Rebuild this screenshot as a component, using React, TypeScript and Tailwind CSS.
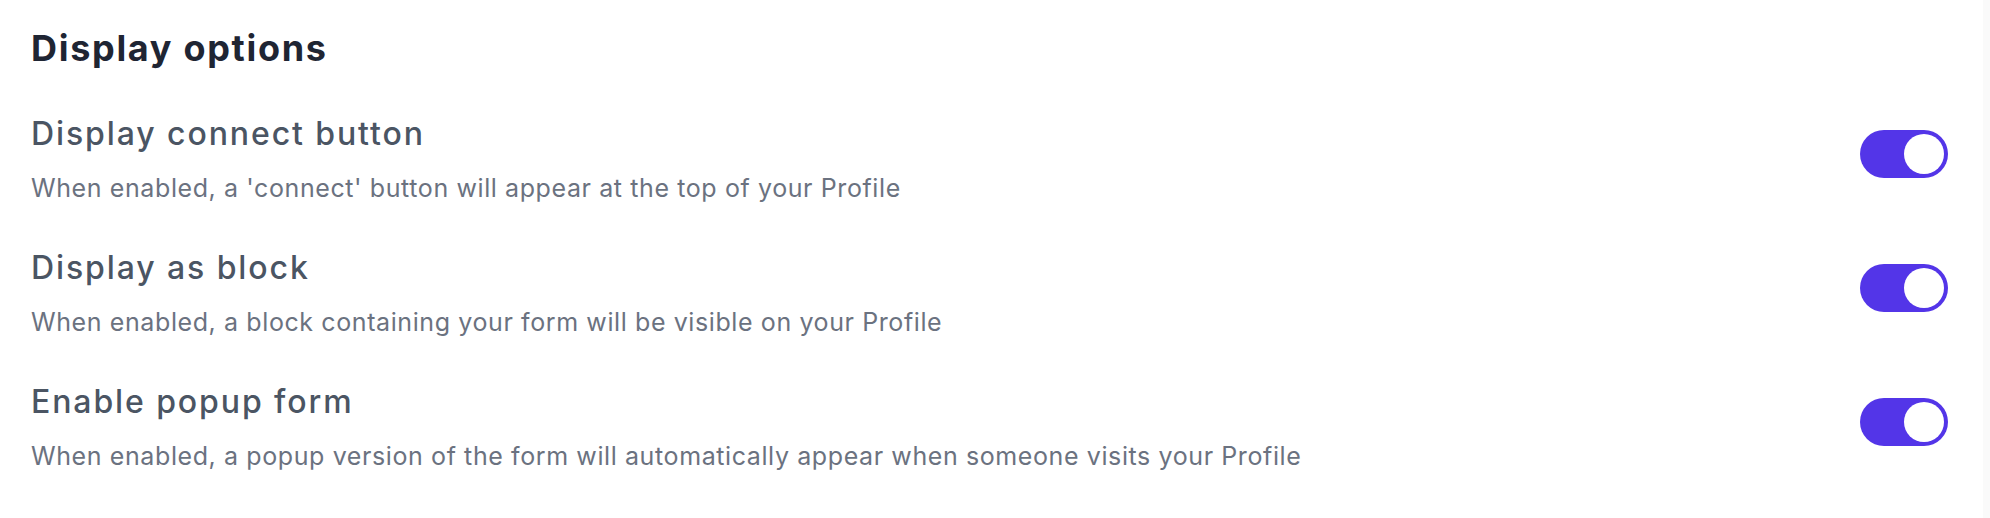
import React, { useState } from 'react';

interface OptionRowProps {
  title: string;
  description: string;
  enabled: boolean;
  onToggle: () => void;
}

const Toggle: React.FC<{ on: boolean; onClick: () => void }> = ({ on, onClick }) => (
  <button
    type="button"
    role="switch"
    aria-checked={on}
    onClick={onClick}
    className={`mt-[15px] flex h-[48px] w-[88px] shrink-0 items-center rounded-full p-[4px] transition-colors ${
      on ? 'justify-end bg-[#5335e8]' : 'justify-start bg-[#d1d5db]'
    }`}
  >
    <span className="block h-[40px] w-[40px] rounded-full bg-white" />
  </button>
);

const OptionRow: React.FC<OptionRowProps> = ({ title, description, enabled, onToggle }) => (
  <div className="flex items-start justify-between pt-[22px] pb-[23px]">
    <div>
      <div className="text-[32px] leading-[38px] font-medium tracking-[1.9px] text-[#4b5563]">{title}</div>
      <div className="mt-[19px] text-[25px] leading-[32px] tracking-[0.6px] text-[#6b7280]">{description}</div>
    </div>
    <Toggle on={enabled} onClick={onToggle} />
  </div>
);

const App: React.FC = () => {
  const [options, setOptions] = useState({
    connect: true,
    block: true,
    popup: true,
  });

  const flip = (key: keyof typeof options) =>
    setOptions((prev) => ({ ...prev, [key]: !prev[key] }));

  return (
    <div className="flex h-[518px] w-[1990px] bg-white font-['Inter',sans-serif]">
      <div className="flex-1 pl-[31px] pr-[35px] pt-[26px]">
        <h2 className="mb-[23px] text-[36px] leading-[44px] font-bold tracking-[1.7px] text-[#1f2533]">
          Display options
        </h2>

        {/* Options */}
        <OptionRow
          title="Display connect button"
          description="When enabled, a 'connect' button will appear at the top of your Profile"
          enabled={options.connect}
          onToggle={() => flip('connect')}
        />
        <OptionRow
          title="Display as block"
          description="When enabled, a block containing your form will be visible on your Profile"
          enabled={options.block}
          onToggle={() => flip('block')}
        />
        <OptionRow
          title="Enable popup form"
          description="When enabled, a popup version of the form will automatically appear when someone visits your Profile"
          enabled={options.popup}
          onToggle={() => flip('popup')}
        />
      </div>
      <div className="w-[7px] bg-[#fafafa]" />
    </div>
  );
};

export default App;
